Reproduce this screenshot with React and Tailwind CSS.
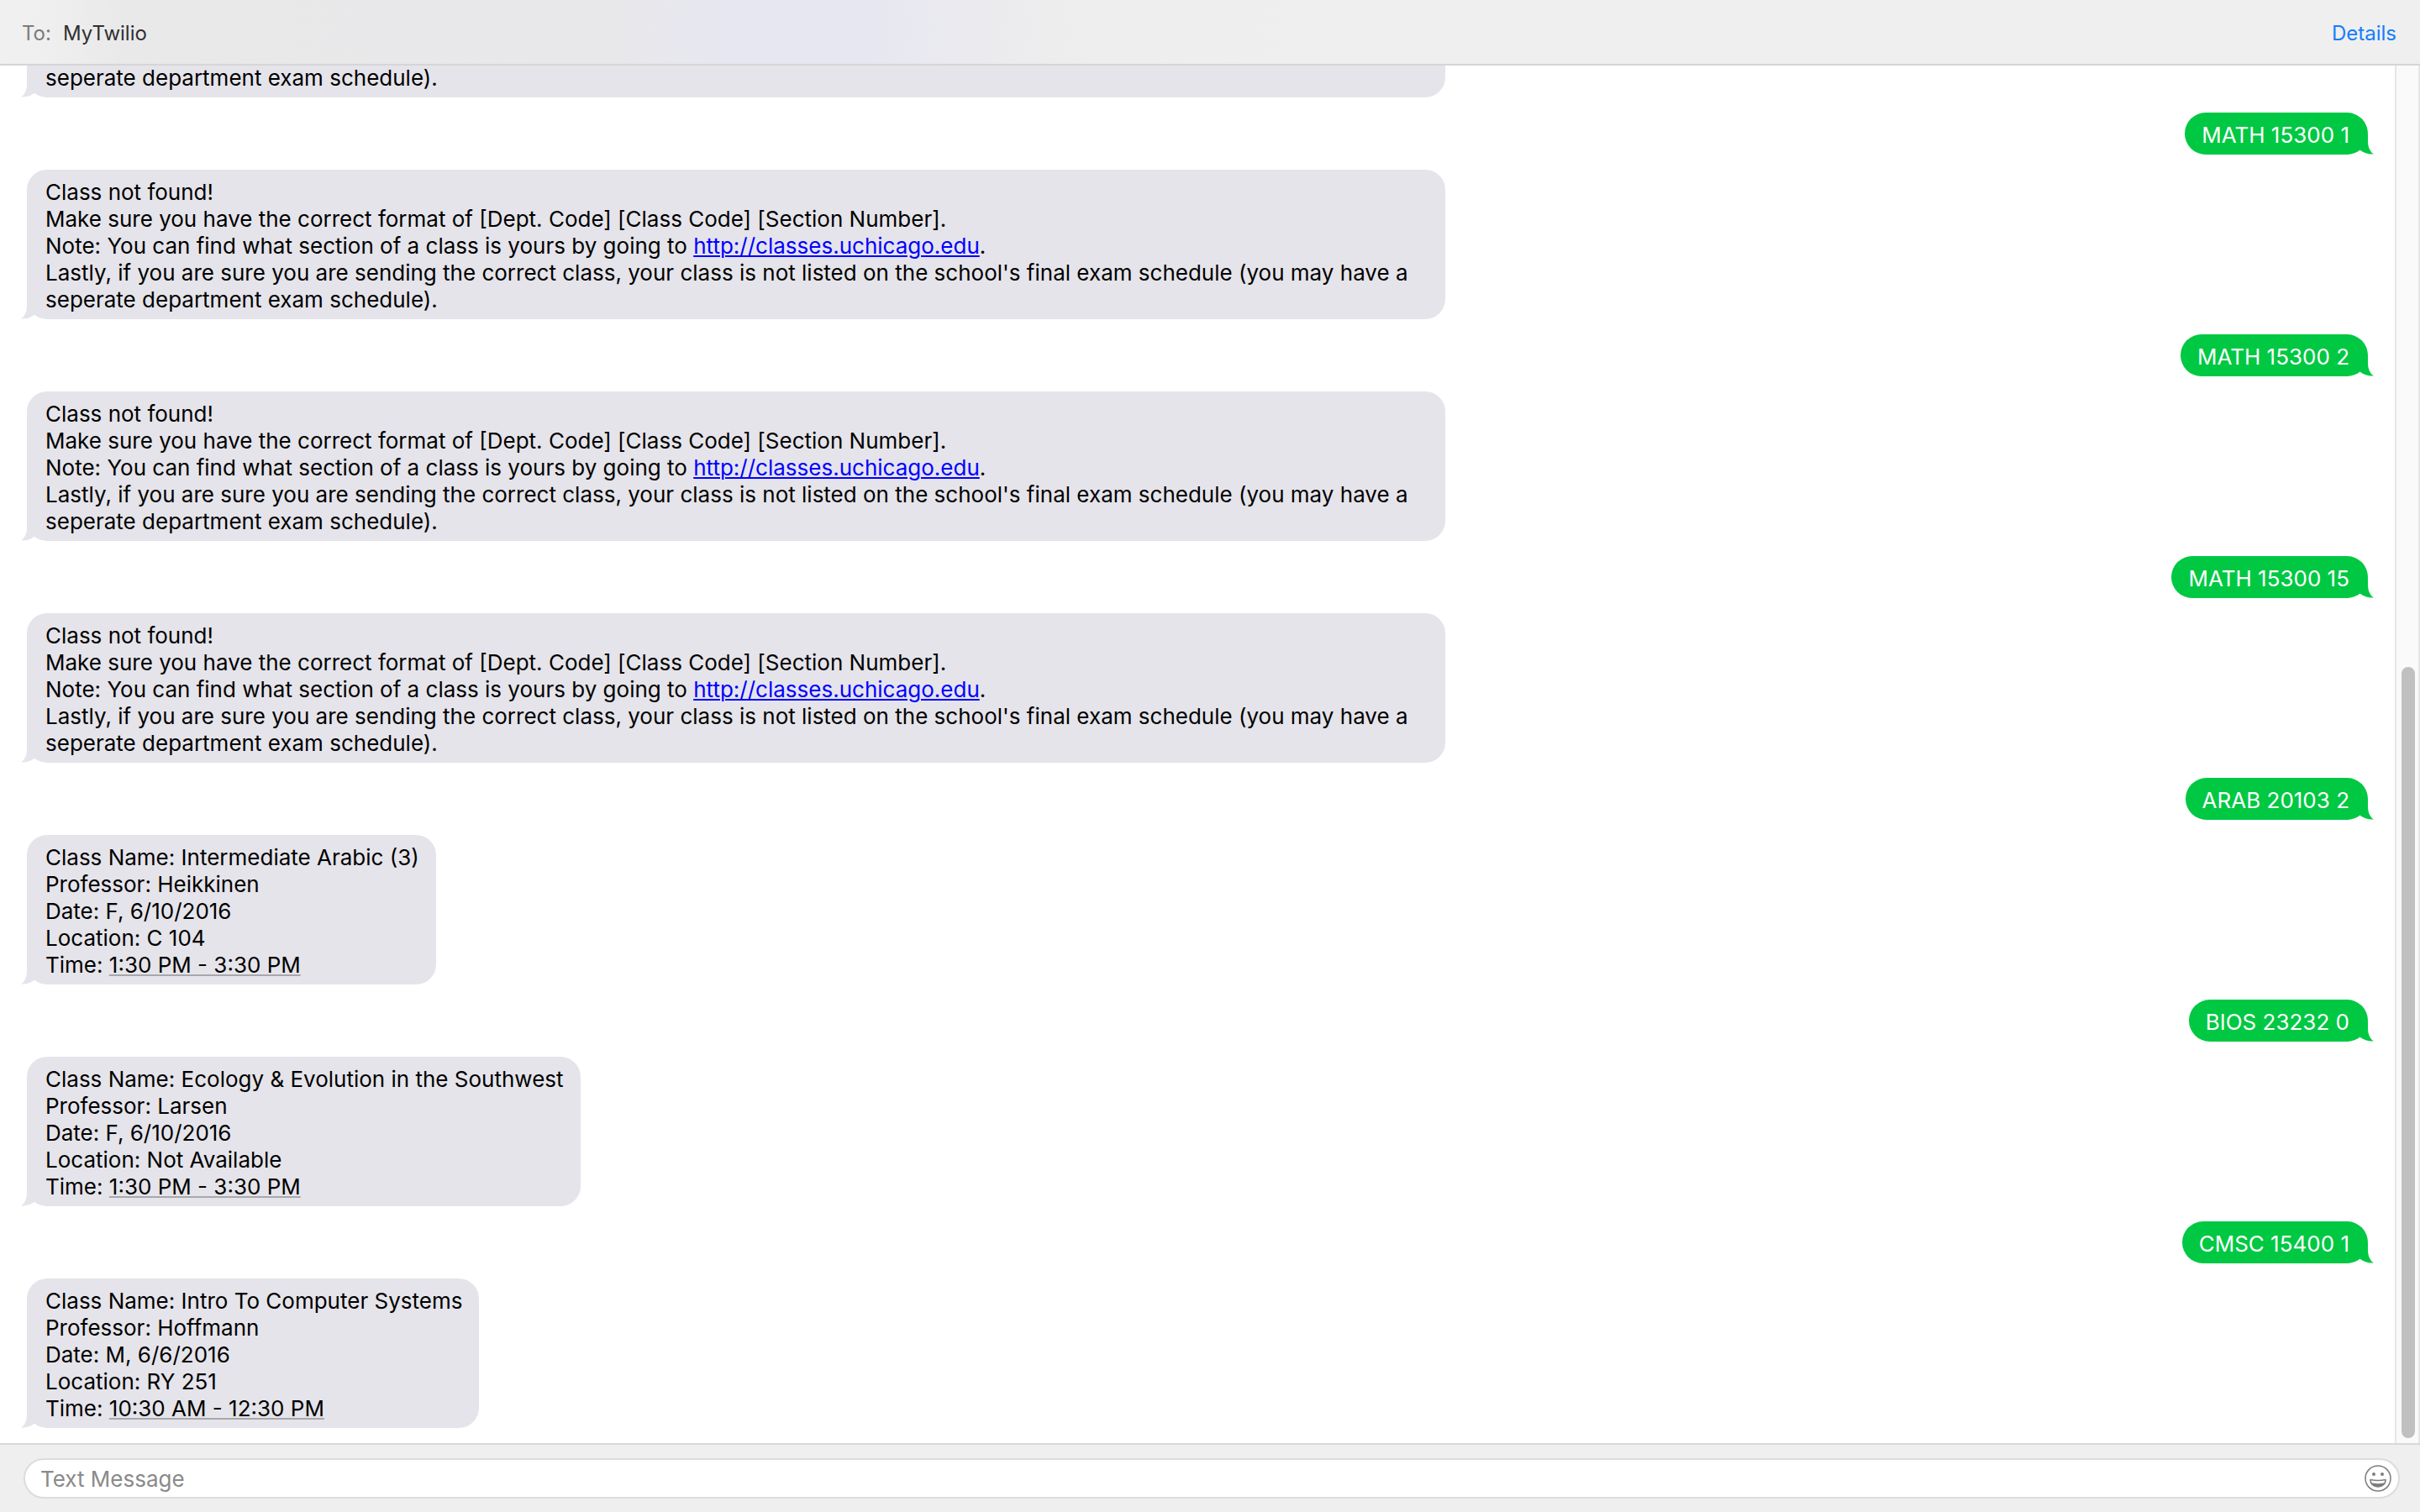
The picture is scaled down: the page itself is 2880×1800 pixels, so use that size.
import React from "react";

const errorText = (
  <>
    <p>Class not found!</p>
    <p>Make sure you have the correct format of [Dept. Code] [Class Code] [Section Number].</p>
    <p>
      Note: You can find what section of a class is yours by going to{" "}
      <a href="http://classes.uchicago.edu" className="text-[#0000ff] underline decoration-2 underline-offset-2">
        http://classes.uchicago.edu
      </a>
      .
    </p>
    <p>
      Lastly, if you are sure you are sending the correct class, your class is not listed on the school's final exam
      schedule (you may have a seperate department exam schedule).
    </p>
  </>
);

function ClassInfo({ name, professor, date, location, time }) {
  return (
    <>
      <p>Class Name: {name}</p>
      <p>Professor: {professor}</p>
      <p>Date: {date}</p>
      <p>Location: {location}</p>
      <p>
        Time: <span className="underline decoration-[#a8a8ac] decoration-2 underline-offset-2">{time}</span>
      </p>
    </>
  );
}

// `continued` draws the lower end of a bubble that is scrolled under the header.
function Received({ children, continued = false }) {
  const shape = continued ? "w-[60.6%] rounded-b-[24px]" : "rounded-[24px] pt-[11px]";
  return (
    <div className={`relative max-w-[60.6%] shrink-0 self-start bg-[#e5e4ea] pb-[7px] pl-[22px] pr-5 text-black ${shape}`}>
      <svg className="absolute bottom-0 -left-2 h-6 w-8" viewBox="0 0 32 24" aria-hidden="true">
        <path d="M8 0V8C8 16 5 21 1 23.5C7 24 13 22 17 19L32 24V0Z" fill="#e5e4ea" />
        <path d="M1 24C8 24 13 22 17 19C21 22.5 26 24 32 24Z" fill="#ffffff" />
      </svg>
      <div className="relative">{children}</div>
    </div>
  );
}

function Sent({ children }) {
  return (
    <div className="relative shrink-0 self-end rounded-full bg-[#00c843] pb-[7px] pl-5 pr-[22px] pt-[11px] text-white">
      <svg className="absolute bottom-0 -right-2 h-6 w-8" viewBox="0 0 32 24" aria-hidden="true">
        <path d="M24 0V8C24 16 27 21 31 23.5C25 24 19 22 15 19L10 12Z" fill="#00c843" />
      </svg>
      <p className="relative">{children}</p>
    </div>
  );
}

export default function App() {
  return (
    <div className="flex h-screen flex-col bg-white font-['Inter',sans-serif] text-[26px] leading-8">
      <header className="flex h-[78px] shrink-0 items-center justify-between border-b-2 border-[#d5d5d5] bg-[#efefef] bg-[linear-gradient(90deg,#f0f0f0_0%,#efefef_2%,#e9e9ea_5%,#e8e8ea_25%,#e7e7f1_30%,#e7e7f1_36%,#ececee_42%,#eeeeee_46%,#efefef_57%)] pl-[26px] pr-7 pt-[3px] text-[24px]">
        <p className="flex gap-[14px]">
          <span className="text-[#7b7b7c]">To:</span>
          <span className="text-[#303032]">MyTwilio</span>
        </p>
        <button type="button" className="text-[#147efb]">
          Details
        </button>
      </header>

      <div className="flex min-h-0 flex-1">
        <main className="flex min-w-0 flex-1 flex-col justify-end gap-[18px] overflow-hidden px-8 pb-[18px]">
          <Received continued>
            <p>seperate department exam schedule).</p>
          </Received>
          <Sent>MATH 15300 1</Sent>
          <Received>{errorText}</Received>
          <Sent>MATH 15300 2</Sent>
          <Received>{errorText}</Received>
          <Sent>MATH 15300 15</Sent>
          <Received>{errorText}</Received>
          <Sent>ARAB 20103 2</Sent>
          <Received>
            <ClassInfo name="Intermediate Arabic (3)" professor="Heikkinen" date="F, 6/10/2016" location="C 104" time="1:30 PM - 3:30 PM" />
          </Received>
          <Sent>BIOS 23232 0</Sent>
          <Received>
            <ClassInfo name="Ecology & Evolution in the Southwest" professor="Larsen" date="F, 6/10/2016" location="Not Available" time="1:30 PM - 3:30 PM" />
          </Received>
          <Sent>CMSC 15400 1</Sent>
          <Received>
            <ClassInfo name="Intro To Computer Systems" professor="Hoffmann" date="M, 6/6/2016" location="RY 251" time="10:30 AM - 12:30 PM" />
          </Received>
        </main>
        <div className="flex w-[30px] shrink-0 flex-col items-end justify-end border-x-2 border-[#e6e6e6] bg-[#fafafa] pb-[6px] pr-1">
          <div className="h-[56.2%] w-4 rounded-full bg-[#c0c0c0]" />
        </div>
      </div>

      <footer className="flex h-[82px] shrink-0 items-center border-t-2 border-[#d8d8d8] bg-[#efefef] pl-7 pr-6">
        <div className="flex h-12 flex-1 items-center rounded-full border-2 border-[#dcdcdc] bg-white pl-[18px] pr-2">
          <input
            type="text"
            aria-label="Text Message"
            placeholder="Text Message"
            className="min-w-0 flex-1 bg-transparent pt-[2px] outline-none placeholder:text-[#8a8a8a]"
          />
          <button type="button" aria-label="Emoji" className="shrink-0">
            <svg className="size-8" viewBox="0 0 32 32" fill="none" aria-hidden="true">
              <circle cx="16" cy="16" r="15" stroke="#7d7d7f" strokeWidth="1.5" />
              <circle cx="11" cy="11" r="2" fill="#7d7d7f" />
              <circle cx="21" cy="11" r="2" fill="#7d7d7f" />
              <path d="M7 17.5C12 18.5 20 18.5 25 17.5C25 23 21 26 16 26S7 23 7 17.5Z" fill="#ffffff" stroke="#7d7d7f" strokeWidth="1.5" strokeLinejoin="round" />
              <path d="M8 21C12 22.5 20 22.5 24 21C23 24.5 20 26 16 26S9 24.5 8 21Z" fill="#7d7d7f" />
            </svg>
          </button>
        </div>
      </footer>
    </div>
  );
}
